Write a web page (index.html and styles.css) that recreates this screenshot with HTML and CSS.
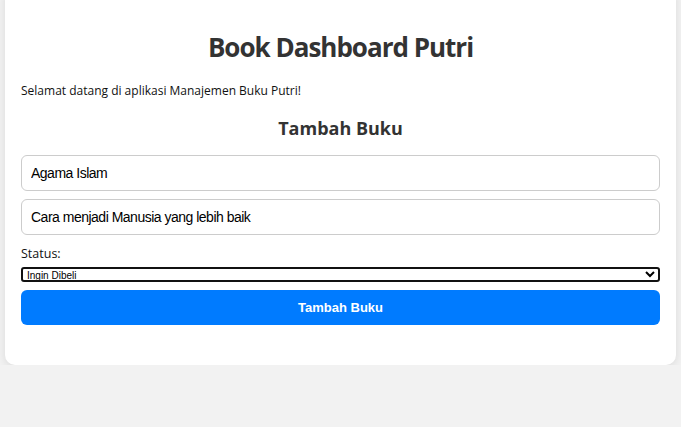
FILE: index.html
```html
<!DOCTYPE html>
<html lang="id">
<head>
<meta charset="utf-8">
<title>Book Dashboard Putri</title>
<link rel="stylesheet" href="styles.css">
</head>
<body>
<div class="container">
  <h1 class="title">Book Dashboard Putri</h1>
  <p class="welcome">Selamat datang di aplikasi Manajemen Buku Putri!</p>
  <h2 class="subtitle">Tambah Buku</h2>
  <form class="form">
    <input class="field" type="text" value="Agama Islam">
    <input class="field" type="text" value="Cara menjadi Manusia yang lebih baik">
    <label class="label">Status:</label>
    <select class="status">
      <option>Ingin Dibeli</option>
    </select>
    <button class="btn" type="button">Tambah Buku</button>
  </form>
</div>
</body>
</html>
```
FILE: styles.css
```css
html, body {
  margin: 0;
  padding: 0;
}
body {
  background: #f2f2f2;
  font-family: "Open Sans", "Noto Sans", sans-serif;
  color: #333;
}
.container {
  margin: -12px 5px 0;
  background: #fff;
  border-radius: 10px;
  box-shadow: 0 2px 10px rgba(0, 0, 0, 0.1);
  padding: 41px 16px 40px;
}
.title {
  margin: 0;
  text-align: center;
  font-size: 26px;
  letter-spacing: -1px;
  line-height: 36px;
  font-weight: 700;
  color: #333;
}
.welcome {
  margin: 17px 0 0;
  font-size: 12px;
  line-height: 18px;
  color: #111;
}
.subtitle {
  margin: 15px 0 0;
  text-align: center;
  font-size: 18px;
  line-height: 26px;
  font-weight: 700;
  color: #333;
}
.form {
  display: flex;
  flex-direction: column;
  margin-top: 14px;
}
.field {
  box-sizing: border-box;
  height: 36px;
  border: 1px solid #ccc;
  border-radius: 6px;
  padding: 0 9px;
  font-family: "Liberation Sans", Arial, sans-serif;
  font-size: 14px;
  letter-spacing: -0.5px;
  color: #000;
  margin-bottom: 8px;
}
.label {
  font-size: 12.5px;
  line-height: 18px;
  color: #111;
  margin-top: 2px;
}
.status {
  box-sizing: border-box;
  margin-top: 4px;
  height: 15px;
  border: 2px solid #111;
  border-radius: 3px;
  font-family: "Liberation Sans", Arial, sans-serif;
  font-size: 10px;
  line-height: 10px;
  padding: 0;
  background: #fff;
  color: #000;
}
.btn {
  margin-top: 8px;
  height: 35px;
  border: none;
  border-radius: 6px;
  background: #007bff;
  color: #fff;
  font-family: "Liberation Sans", Arial, sans-serif;
  font-size: 13px;
  font-weight: 700;
}
```
